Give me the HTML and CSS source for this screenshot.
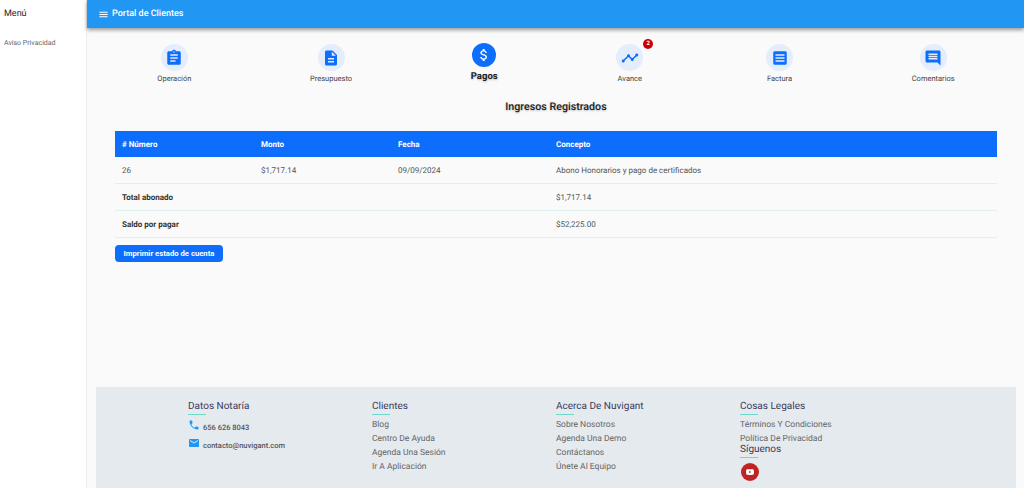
FILE: index.html
```html
<!DOCTYPE html>
<html lang="es">
<head>
    <meta charset="UTF-8">
    <meta name="viewport" content="width=device-width, initial-scale=1.0">
    <title>Portal de Clientes</title>
    <link rel="stylesheet" href="styles.css">
</head>
<body>
    <aside class="sidebar">
        <div class="sidebar-title">Menú</div>
        <a class="sidebar-link">Aviso Privacidad</a>
    </aside>
    <div class="page">
        <header class="topbar">
            <svg class="topbar-icon" viewBox="0 0 24 24"><path d="M3 18h18v-2H3v2zm0-5h18v-2H3v2zm0-7v2h18V6H3z"/></svg>
            <span>Portal de Clientes</span>
        </header>
        <main class="content">
            <nav class="steps">
                <div class="step">
                    <span class="step-circle"><svg viewBox="0 0 24 24"><path d="M19 3h-4.18C14.4 1.84 13.3 1 12 1c-1.3 0-2.4.84-2.82 2H5c-1.1 0-2 .9-2 2v14c0 1.1.9 2 2 2h14c1.1 0 2-.9 2-2V5c0-1.1-.9-2-2-2zm-7 0c.55 0 1 .45 1 1s-.45 1-1 1-1-.45-1-1 .45-1 1-1zm2 14H7v-2h7v2zm3-4H7v-2h10v2zm0-4H7V7h10v2z"/></svg></span>
                    <span class="step-label">Operación</span>
                </div>
                <div class="step">
                    <span class="step-circle"><svg viewBox="0 0 24 24"><path d="M14 2H6c-1.1 0-1.99.9-1.99 2L4 20c0 1.1.89 2 1.99 2H18c1.1 0 2-.9 2-2V8l-6-6zm2 16H8v-2h8v2zm0-4H8v-2h8v2zm-3-5V3.5L18.5 9H13z"/></svg></span>
                    <span class="step-label">Presupuesto</span>
                </div>
                <div class="step step-active">
                    <span class="step-circle"><svg viewBox="0 0 24 24"><path d="M11.8 10.9c-2.27-.59-3-1.2-3-2.15 0-1.09 1.01-1.85 2.7-1.85 1.78 0 2.44.85 2.5 2.1h2.21c-.07-1.72-1.12-3.3-3.21-3.81V3h-3v2.16c-1.94.42-3.5 1.68-3.5 3.61 0 2.31 1.91 3.46 4.7 4.13 2.5.6 3 1.48 3 2.41 0 .69-.49 1.79-2.7 1.79-2.06 0-2.87-.92-2.98-2.1h-2.2c.12 2.19 1.76 3.42 3.68 3.83V21h3v-2.15c1.95-.37 3.5-1.5 3.5-3.55 0-2.84-2.43-3.81-4.7-4.4z"/></svg></span>
                    <span class="step-label">Pagos</span>
                </div>
                <div class="step step-badged">
                    <span class="step-circle"><svg viewBox="0 0 24 24"><path d="M23 8c0 1.1-.9 2-2 2-.18 0-.35-.02-.51-.07l-3.56 3.55c.05.16.07.34.07.52 0 1.1-.9 2-2 2s-2-.9-2-2c0-.18.02-.36.07-.52l-2.55-2.55c-.16.05-.34.07-.52.07s-.36-.02-.52-.07l-4.55 4.56c.05.16.07.33.07.51 0 1.1-.9 2-2 2s-2-.9-2-2 .9-2 2-2c.18 0 .35.02.51.07l4.56-4.55C8.02 9.36 8 9.18 8 9c0-1.1.9-2 2-2s2 .9 2 2c0 .18-.02.36-.07.52l2.55 2.55c.16-.05.34-.07.52-.07s.36.02.52.07l3.55-3.56C19.02 8.35 19 8.18 19 8c0-1.1.9-2 2-2s2 .9 2 2z"/></svg><span class="badge">2</span></span>
                    <span class="step-label">Avance</span>
                </div>
                <div class="step">
                    <span class="step-circle"><svg viewBox="0 0 24 24"><path d="M19 3H5c-1.1 0-2 .9-2 2v14c0 1.1.9 2 2 2h14c1.1 0 2-.9 2-2V5c0-1.1-.9-2-2-2zm-1 14H6v-2h12v2zm0-4H6v-2h12v2zm0-4H6V7h12v2z"/></svg></span>
                    <span class="step-label">Factura</span>
                </div>
                <div class="step">
                    <span class="step-circle"><svg viewBox="0 0 24 24"><path d="M21.99 4c0-1.1-.89-2-1.99-2H4c-1.1 0-2 .9-2 2v12c0 1.1.9 2 2 2h14l4 4-.01-18zM18 14H6v-2h12v2zm0-3H6V9h12v2zm0-3H6V6h12v2z"/></svg></span>
                    <span class="step-label">Comentarios</span>
                </div>
            </nav>
            <h2 class="section-title">Ingresos Registrados</h2>
            <section class="payments">
                <table class="payments-table">
                    <thead>
                        <tr>
                            <th class="col-number"># Número</th>
                            <th class="col-amount">Monto</th>
                            <th class="col-date">Fecha</th>
                            <th>Concepto</th>
                        </tr>
                    </thead>
                    <tbody>
                        <tr>
                            <td>26</td>
                            <td>$1,717.14</td>
                            <td>09/09/2024</td>
                            <td>Abono Honorarios y pago de certificados</td>
                        </tr>
                        <tr>
                            <td colspan="3" class="cell-strong">Total abonado</td>
                            <td>$1,717.14</td>
                        </tr>
                        <tr>
                            <td colspan="3" class="cell-strong">Saldo por pagar</td>
                            <td>$52,225.00</td>
                        </tr>
                    </tbody>
                </table>
                <button class="print-btn" type="button">Imprimir estado de cuenta</button>
            </section>
            <footer class="footer">
                <div class="footer-grid">
                    <div class="footer-col">
                        <h4 class="footer-title">Datos Notaría</h4>
                        <div class="contact">
                            <svg viewBox="0 0 24 24"><path d="M6.62 10.79c1.44 2.83 3.76 5.14 6.59 6.59l2.2-2.2c.27-.27.67-.36 1.02-.24 1.12.37 2.33.57 3.57.57.55 0 1 .45 1 1V20c0 .55-.45 1-1 1-9.39 0-17-7.61-17-17 0-.55.45-1 1-1h3.5c.55 0 1 .45 1 1 0 1.25.2 2.45.57 3.57.11.35.03.74-.25 1.02l-2.2 2.2z"/></svg>
                            <span>656 626 8043</span>
                        </div>
                        <div class="contact">
                            <svg viewBox="0 0 24 24"><path d="M20 4H4c-1.1 0-1.99.9-1.99 2L2 18c0 1.1.9 2 2 2h16c1.1 0 2-.9 2-2V6c0-1.1-.9-2-2-2zm0 4l-8 5-8-5V6l8 5 8-5v2z"/></svg>
                            <span>contacto@nuvigant.com</span>
                        </div>
                    </div>
                    <div class="footer-col">
                        <h4 class="footer-title">Clientes</h4>
                        <a class="footer-link">Blog</a>
                        <a class="footer-link">Centro De Ayuda</a>
                        <a class="footer-link">Agenda Una Sesión</a>
                        <a class="footer-link">Ir A Aplicación</a>
                    </div>
                    <div class="footer-col">
                        <h4 class="footer-title">Acerca De Nuvigant</h4>
                        <a class="footer-link">Sobre Nosotros</a>
                        <a class="footer-link">Agenda Una Demo</a>
                        <a class="footer-link">Contáctanos</a>
                        <a class="footer-link">Únete Al Equipo</a>
                    </div>
                    <div class="footer-col">
                        <h4 class="footer-title">Cosas Legales</h4>
                        <a class="footer-link">Términos Y Condiciones</a>
                        <a class="footer-link">Política De Privacidad</a>
                        <h4 class="footer-title footer-title-tight">Síguenos</h4>
                        <span class="social">
                            <svg viewBox="0 0 24 24"><path d="M21 7.500c-.2-1-1-1.800-2-2C17.400 5.100 12 5.100 12 5.100s-5.400 0-7 .4c-1 .2-1.800 1-2 2-.4 1.500-.4 4.500-.4 4.500s0 3 .4 4.500c.2 1 1 1.800 2 2 1.600.4 7 .4 7 .4s5.400 0 7-.4c1-.2 1.800-1 2-2 .4-1.500.4-4.500.4-4.500s0-3-.4-4.500zM10 15V9l5 3-5 3z"/></svg>
                        </span>
                    </div>
                </div>
            </footer>
        </main>
    </div>
</body>
</html>
```
FILE: styles.css
```css
html, body {
    height: 100%;
}
body {
    font-family: Roboto, Arial, sans-serif;
    text-rendering: geometricPrecision;
    background-color: #fafafa;
    margin: 0;
    display: flex;
    overflow: hidden;
    color: #444;
}
.sidebar {
    width: 87px;
    flex: none;
    background: #fff;
    border-right: 1px solid #eee;
    box-sizing: border-box;
    padding: 0 4px;
}
.sidebar-title {
    font-size: 9px;
    line-height: 28px;
    color: #222;
}
.sidebar-link {
    display: block;
    margin-top: 9px;
    font-size: 7px;
    line-height: 12px;
    color: #666;
}
.page {
    flex: 1;
    min-width: 0;
    display: flex;
    flex-direction: column;
}
.topbar {
    height: 28px;
    flex: none;
    display: flex;
    align-items: center;
    gap: 3px;
    padding-left: 11px;
    background: #2196f3;
    color: #fff;
    font-size: 9px;
    font-weight: 500;
    box-shadow: 0 2px 4px rgba(0, 0, 0, 0.4);
    position: relative;
}
.topbar-icon {
    width: 11px;
    height: 11px;
    fill: #fff;
}
.content {
    flex: 1;
    padding: 0 8px 0 9px;
}
.steps {
    display: flex;
    justify-content: space-around;
    align-items: flex-start;
    padding: 15px 2px 0;
    height: 41px;
}
.step {
    display: flex;
    flex-direction: column;
    align-items: center;
}
.step-badged {
    margin-right: 4px;
}
.step-circle {
    position: relative;
    width: 27px;
    height: 27px;
    margin-top: 1px;
    border-radius: 50%;
    background: #e3edfc;
    display: flex;
    align-items: center;
    justify-content: center;
}
.step-circle svg {
    width: 18px;
    height: 18px;
    fill: #0d6efd;
}
.step-label {
    margin-top: 2px;
    font-size: 7.500px;
    line-height: 12px;
    color: #444;
}
.step-active .step-circle {
    width: 24px;
    height: 24px;
    margin-top: 0;
    background: #0d6efd;
}
.step-active .step-circle svg {
    width: 16px;
    height: 16px;
    fill: #fff;
}
.step-active .step-label {
    margin-top: 4px;
    font-size: 9.500px;
    font-weight: 700;
    color: #222;
    text-shadow: 0 1px 2px rgba(0, 0, 0, 0.25);
}
.badge {
    position: absolute;
    top: -5px;
    right: -10px;
    width: 10px;
    height: 10px;
    border-radius: 50%;
    background: #c00;
    color: #fff;
    font-size: 6px;
    font-weight: 700;
    line-height: 10px;
    text-align: center;
}
.section-title {
    margin: 0;
    padding-top: 16px;
    height: 32px;
    box-sizing: border-box;
    font-size: 10.700px;
    line-height: 14px;
    font-weight: 500;
    text-align: center;
    color: #222;
    text-shadow: 0 1px 2px rgba(0, 0, 0, 0.25);
}
.payments {
    padding: 0 19px 0 19px;
    margin-top: 15px;
    height: 256px;
}
.payments-table {
    width: 100%;
    border-collapse: collapse;
    font-size: 8px;
    text-align: left;
}
.payments-table th {
    height: 26px;
    padding: 0 7px;
    background: #0d6efd;
    color: #fff;
    font-size: 8px;
    font-weight: 700;
}
.payments-table td {
    height: 26px;
    padding: 0 7px;
    border-bottom: 1px solid #dff0f0;
    color: #555;
}
.payments-table .cell-strong {
    font-weight: 700;
    color: #333;
}
.col-number {
    width: 125px;
}
.col-amount {
    width: 123px;
}
.col-date {
    width: 144px;
}
.print-btn {
    display: block;
    margin-top: 7px;
    width: 108px;
    height: 17px;
    padding: 0;
    border: none;
    border-radius: 4px;
    background: #0d6efd;
    color: #fff;
    font-family: inherit;
    font-size: 7.700px;
    font-weight: 700;
}
.footer {
    background: #e5eaef;
    height: 101px;
    padding: 14px 92px 0 92px;
    box-sizing: border-box;
}
.footer-grid {
    display: grid;
    grid-template-columns: repeat(4, 184px);
}
.footer-col {
    display: flex;
    flex-direction: column;
    align-items: flex-start;
}
.footer-title {
    position: relative;
    margin: 0 0 3px;
    padding-bottom: 2px;
    font-size: 10px;
    line-height: 12px;
    font-weight: 400;
    color: #3a3a5a;
}
.footer-title::after {
    content: "";
    position: absolute;
    left: 0;
    bottom: 0;
    width: 18px;
    height: 1px;
    background: #6fd8c8;
}
.footer-title-tight {
    margin: -2px 0 5px;
}
.footer-link {
    font-size: 8.500px;
    line-height: 14px;
    color: #666;
}
.contact {
    display: flex;
    align-items: flex-start;
    gap: 3px;
    margin: 1px 0 4px;
    font-size: 7.500px;
    font-weight: 500;
    color: #555;
}
.contact span {
    padding-top: 4px;
}
.contact svg {
    width: 12px;
    height: 12px;
    fill: #2196f3;
}
.social {
    width: 18px;
    height: 18px;
    margin-left: 1px;
    border-radius: 50%;
    background: #bf2424;
    display: flex;
    align-items: center;
    justify-content: center;
}
.social svg {
    width: 10px;
    height: 10px;
    fill: #fff;
}
```
